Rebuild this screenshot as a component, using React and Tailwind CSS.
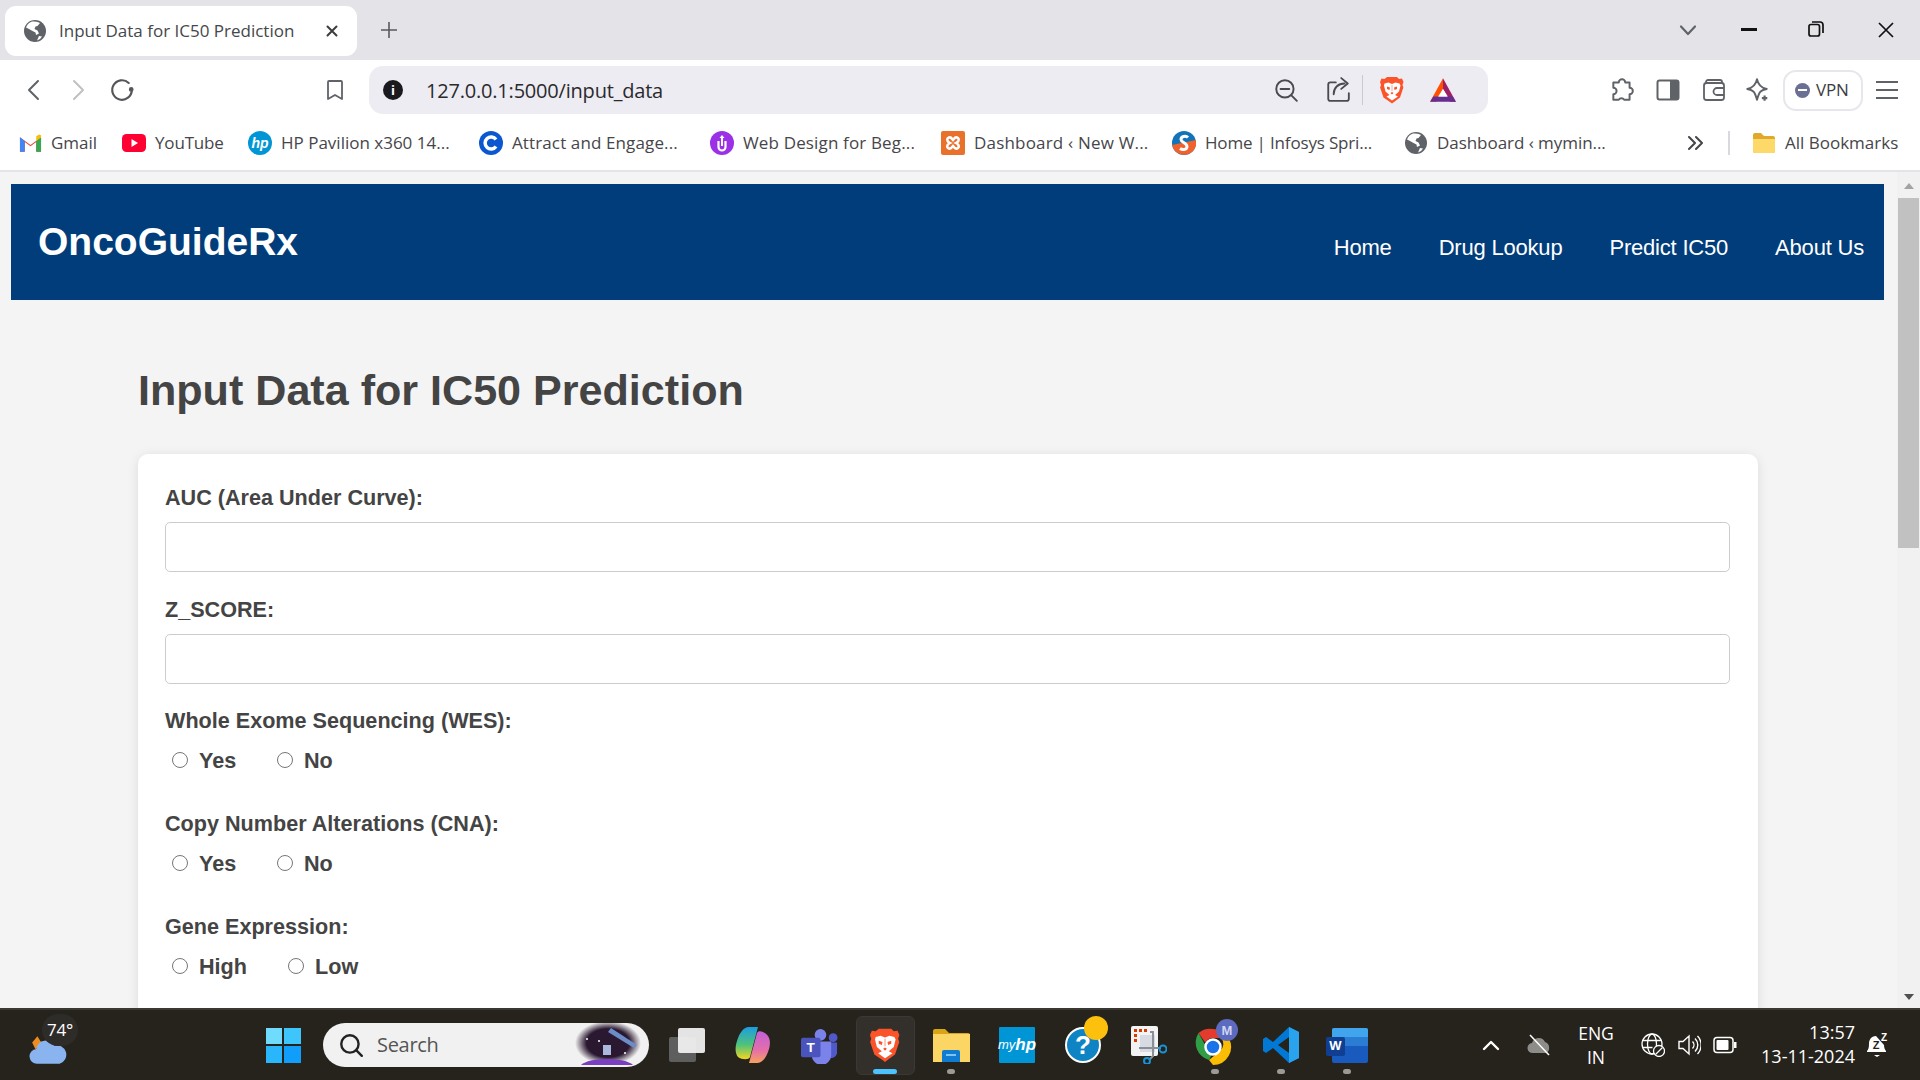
import React from "react";

const ui = "font-['Open_Sans','Noto_Sans',sans-serif]";

function Globe({ className }) {
  return (
    <svg viewBox="0 0 24 24" className={className}>
      <circle cx="12" cy="12" r="11" fill="#5f6368" />
      <path d="M9 2.500c3 0 6 0 8 1.500l-2.500 3-2 .5-1 2.500 3 1.500 1.500 3-3 1.500-.5-2.500-3-1.500-3.500-2L3 8.500c1-3 3-5 6-6z" fill="#fff" />
      <path d="M16 17l3 .5-2 2.500-3 1.500z" fill="#fff" />
    </svg>
  );
}

function Lion({ className }) {
  return (
    <svg viewBox="0 0 24 28" className={className}>
      <path d="M7 1h10l2 2 3-.5 1.500 3.500-1 3 .9 2.500-3.400 10L14 26l-2 1.500L10 26l-6.500-4.500L.1 11.500 1 9 0 6l1.500-3.500 3 .5z" fill="#fb542b" />
      <path d="M4.500 7.500l4-1 3.500 1.500 3.500-1.500 4 1 1 2-1.500 6-4 3.500 3 1.500L12 24.500 6.500 20.500l3-1.500-4-3.500-1.500-6z" fill="#fff" />
      <path d="M7 10.500l3 1-.5 2.500-2.500-1zM17 10.500l-3 1 .5 2.500 2.500-1zM10.500 17l1.500-1 1.500 1L12 18.500z" fill="#fb542b" />
      <path d="M11.500 9h1v6h-1z" fill="#fb542b" opacity=".5" />
    </svg>
  );
}

function Bat({ className }) {
  return (
    <svg viewBox="0 0 26 24" className={className}>
      <path d="M13 1L1 23h5.500L13 11z" fill="#ff5000" />
      <path d="M13 1l12 22h-5.500L13 11z" fill="#9e1f63" />
      <path d="M1 23h24l-3-5H4z" fill="#662d91" />
      <path d="M13 11l-4.500 7h9z" fill="#fff" />
    </svg>
  );
}

function Stroke({ className, children, w = 1.7, c = "#5f6368", vb = "0 0 24 24" }) {
  return (
    <svg viewBox={vb} className={className} fill="none" stroke={c} strokeWidth={w} strokeLinecap="round" strokeLinejoin="round">
      {children}
    </svg>
  );
}

function Bookmark({ text, icon, cls, track = "" }) {
  return (
    <div className={"flex items-center gap-[9px] shrink-0 " + cls}>
      {icon}
      <span className={"whitespace-nowrap text-[17px] leading-[24px] text-[#46464a] " + track}>{text}</span>
    </div>
  );
}

function Slot({ children, dot, active }) {
  return (
    <div className="relative w-[66px] h-full flex items-center justify-center shrink-0">
      {active && <div className="absolute left-[4px] top-[6px] w-[59px] h-[59px] rounded-[6px] bg-[#33302b] border border-[#3b3833]" />}
      <div className="relative flex items-center justify-center">{children}</div>
      {dot && <div className="absolute left-[29px] bottom-[6px] w-[8px] h-[5px] rounded-full bg-[#9b9a96]" />}
      {active && <div className="absolute left-[21px] bottom-[6px] w-[24px] h-[5px] rounded-full bg-[#4cc2ff]" />}
    </div>
  );
}

function Radio({ text, gap }) {
  return (
    <label className={"flex items-center " + gap}>
      <span className="w-[16px] h-[16px] rounded-full border border-[#767676] bg-white shrink-0 -mt-[2px]" />
      <span className="ml-[11px] text-[21.6px] leading-[24px] font-bold text-[#444]">{text}</span>
    </label>
  );
}

function Field({ label, cls }) {
  return (
    <div className={cls}>
      <div className="text-[21.6px] leading-[23px] font-bold text-[#444]">{label}</div>
      <input className="block mt-[13px] w-full h-[50px] border border-[#ccc] rounded-[5px] bg-white" />
    </div>
  );
}

function RadioGroup({ label, a, b, bGap, cls }) {
  return (
    <div className={cls}>
      <div className="text-[21.6px] leading-[23px] font-bold text-[#444]">{label}</div>
      <div className="flex mt-[17px] ml-[7px]">
        <Radio text={a} gap={bGap} />
        <Radio text={b} gap="" />
      </div>
    </div>
  );
}

export default function App() {
  return (
    <div className="w-[1920px] h-[1080px] flex flex-col overflow-hidden bg-[#f4f4f4]">
      {/* Tab strip */}
      <div className={"h-[60px] bg-[#e3e3e8] flex shrink-0 relative " + ui}>
        <div className="ml-[5px] mt-[6px] w-[352px] h-[50px] bg-white rounded-[11px] flex items-center pl-[18px] shrink-0">
          <Globe className="w-[24px] h-[24px] shrink-0" />
          <span className="ml-[12px] text-[17px] text-[#45474a] whitespace-nowrap">Input Data for IC50 Prediction</span>
          <svg viewBox="0 0 12 12" className="w-[12px] h-[12px] ml-auto mr-[19px]" stroke="#3c3c40" strokeWidth="2" strokeLinecap="round"><path d="M1.500 1.500l9 9M10.500 1.500l-9 9" /></svg>
        </div>
        <svg viewBox="0 0 16 16" className="w-[16px] h-[16px] ml-[24px] mt-[22px]" stroke="#5a5a5e" strokeWidth="1.600"><path d="M8 0v16M0 8h16" /></svg>
        <Stroke className="w-[18px] h-[18px] ml-[1282px] mt-[21px]" w={2.2} vb="0 0 18 18"><path d="M2 5.500l7 7.500 7-7.500" /></Stroke>
        <div className="w-[16px] h-[2.500px] bg-[#111] ml-[44px] mt-[28px]" />
        <svg viewBox="0 0 16 16" className="w-[16px] h-[16px] ml-[51px] mt-[21px]" fill="none" stroke="#111" strokeWidth="1.700"><rect x="1" y="3.500" width="10.500" height="11.500" rx="2" /><path d="M4 1h8a3 3 0 0 1 3 3v8" /></svg>
        <svg viewBox="0 0 16 16" className="w-[16px] h-[16px] ml-[54px] mt-[22px]" stroke="#111" strokeWidth="1.700"><path d="M1 1l14 14M15 1L1 15" /></svg>
      </div>
      {/* Toolbar */}
      <div className={"h-[60px] bg-white flex items-center shrink-0 " + ui}>
        <Stroke className="w-[24px] h-[24px] ml-[22px]" w={2}><path d="M16 3L7 12l9 9" /></Stroke>
        <Stroke className="w-[24px] h-[24px] ml-[20px]" w={2} c="#c0c0c4"><path d="M8 3l9 9-9 9" /></Stroke>
        <Stroke className="w-[26px] h-[26px] ml-[19px]" w={2} c="#55565a"><path d="M21 12a9 9 0 1 1-2.800-6.500" /><circle cx="20.500" cy="11.500" r="1.200" fill="#55565a" /></Stroke>
        <Stroke className="w-[24px] h-[24px] ml-[188px]" w={1.800}><path d="M6 3h12a1 1 0 0 1 1 1v17l-7-4-7 4V4a1 1 0 0 1 1-1z" /></Stroke>
        <div className="ml-[22px] w-[1119px] h-[48px] bg-[#edecf2] rounded-[14px] flex items-center relative shrink-0">
          <div className="ml-[14px] w-[20px] h-[20px] rounded-full bg-[#1a1a1e] flex items-center justify-center text-white text-[13px] font-bold leading-none">i</div>
          <span className="ml-[23px] mt-[1px] text-[20px] tracking-[-0.2px] text-[#2a2a2e] whitespace-nowrap">127.0.0.1:5000/input_data</span>
          <div className="ml-auto flex items-center">
            <Stroke className="w-[26px] h-[26px]" w={1.800} c="#4a4b50"><circle cx="11" cy="11" r="8" /><path d="M7 11h8M17 17l5 5" /></Stroke>
            <Stroke className="w-[26px] h-[26px] ml-[26px]" w={1.700} c="#4a4b50"><path d="M10 5H5a2 2 0 0 0-2 2v13a2 2 0 0 0 2 2h15a2 2 0 0 0 2-2v-5" /><path d="M8 16c0-6 4-10 10-10M15 1l6 5-6 5" /></Stroke>
            <div className="w-[1.500px] h-[30px] bg-[#c9c9cf] ml-[11px]" />
            <Lion className="w-[24px] h-[28px] ml-[17px]" />
            <Bat className="w-[28px] h-[26px] ml-[25px] mr-[31px]" />
          </div>
        </div>
        <svg viewBox="0 0 24 24" className="w-[26px] h-[26px] ml-[121px]" fill="none" stroke="#5f6368" strokeWidth="1.800" strokeLinejoin="round"><path d="M9 5a3 3 0 0 1 6 0h4v5a3 3 0 0 1 0 6v5h-5a3 3 0 0 0-5 0H4v-5a3 3 0 0 0 0-6V5z" /></svg>
        <svg viewBox="0 0 24 24" className="w-[24px] h-[24px] ml-[21px]"><rect x="1.500" y="2.500" width="21" height="19" rx="2" fill="none" stroke="#5f6368" strokeWidth="2" /><rect x="14" y="3" width="8" height="18" fill="#5f6368" /></svg>
        <svg viewBox="0 0 24 24" className="w-[24px] h-[24px] ml-[22px]" fill="none" stroke="#5f6368" strokeWidth="1.800"><rect x="2" y="5" width="20" height="17" rx="2.500" /><path d="M4 5V4a2 2 0 0 1 2-2h12a2 2 0 0 1 2 2v1M22 10h-7a3 3 0 0 0 0 7h7" /></svg>
        <svg viewBox="0 0 24 24" className="w-[26px] h-[26px] ml-[18px]" fill="none" stroke="#5f6368" strokeWidth="1.800" strokeLinejoin="round"><path d="M12 2c1 5 3 8 9 9-6 1-7 3-9 10-2-7-3-9-9-10 6-1 8-4 9-9z" /><path d="M19 17v5M16.500 19.500h5" strokeWidth="2" /></svg>
        <div className="ml-[13px] w-[80px] h-[41px] rounded-[13px] border-2 border-[#e6e6ec] flex items-center pl-[10px] shrink-0">
          <div className="w-[15px] h-[15px] rounded-full bg-[#6b6f93] flex items-center justify-center"><div className="w-[9px] h-[2px] bg-white" /></div>
          <span className="ml-[6px] text-[17px] tracking-[-0.2px] text-[#3c3c40]">VPN</span>
        </div>
        <div className="ml-[13px] w-[22px] flex flex-col gap-[6px] shrink-0">
          <div className="h-[2px] bg-[#5f6368]" /><div className="h-[2px] bg-[#5f6368]" /><div className="h-[2px] bg-[#5f6368]" />
        </div>
      </div>
      {/* Bookmarks */}
      <div className={"h-[52px] bg-white border-b-2 border-[#e3e3e8] flex items-center pl-[19px] pb-[4px] shrink-0 " + ui}>
        <Bookmark cls="w-[103px]" text="Gmail" icon={
          <svg viewBox="0 0 24 18" className="w-[23px] h-[18px]"><path d="M1 18V3l11 8 11-8v15h-5V8l-6 4.500L6 8v10z" fill="#ea4335" /><path d="M1 3v15h5V7z" fill="#4285f4" /><path d="M23 3v15h-5V7z" fill="#34a853" /><path d="M18 7l5-4V1l-2-1-3 2z" fill="#fbbc04" /></svg>
        } />
        <Bookmark cls="w-[126px]" track="tracking-[-0.17px]" text="YouTube" icon={
          <svg viewBox="0 0 24 18" className="w-[24px] h-[18px]"><rect width="24" height="18" rx="4.500" fill="#ff0033" /><path d="M9.500 5l6.500 4-6.500 4z" fill="#fff" /></svg>
        } />
        <Bookmark cls="w-[231px]" text="HP Pavilion x360 14..." icon={
          <svg viewBox="0 0 24 24" className="w-[24px] h-[24px]"><circle cx="12" cy="12" r="12" fill="#0096d6" /><text x="12" y="17" textAnchor="middle" fontSize="14" fontStyle="italic" fontWeight="700" fill="#fff" fontFamily="Liberation Sans">hp</text></svg>
        } />
        <Bookmark cls="w-[231px]" track="tracking-[0.12px]" text="Attract and Engage..." icon={
          <svg viewBox="0 0 24 24" className="w-[24px] h-[24px]"><circle cx="12" cy="12" r="12" fill="#0b57d0" /><path d="M17 8.500a6 6 0 1 0 0 7" fill="none" stroke="#fff" strokeWidth="3.500" /></svg>
        } />
        <Bookmark cls="w-[231px]" track="tracking-[0.15px]" text="Web Design for Beg..." icon={
          <svg viewBox="0 0 24 24" className="w-[24px] h-[24px]"><circle cx="12" cy="12" r="12" fill="#9b30e6" /><path d="M8.500 10v6a3.500 3.500 0 0 0 7 0v-6" fill="none" stroke="#fff" strokeWidth="2.200" /><path d="M12 4l2.500 3h-5zM11 7h2v8h-2z" fill="#fff" /></svg>
        } />
        <Bookmark cls="w-[231px]" track="tracking-[0.19px]" text="Dashboard ‹ New W..." icon={
          <svg viewBox="0 0 24 24" className="w-[24px] h-[24px]"><rect width="24" height="24" rx="2" fill="#e8722c" /><path d="M7 7c3-2 4 1 5 2 1-1 2-4 5-2 2 2 0 4-2 5 2 1 4 3 2 5-3 2-4-1-5-2-1 1-2 4-5 2-2-2 0-4 2-5-2-1-4-3-2-5z" fill="none" stroke="#fff" strokeWidth="2.500" /></svg>
        } />
        <Bookmark cls="w-[232px]" track="tracking-[-0.17px]" text="Home | Infosys Spri..." icon={
          <svg viewBox="0 0 24 24" className="w-[24px] h-[24px]"><circle cx="12" cy="12" r="12" fill="#1173b8" /><path d="M0 14L24 9a12 12 0 0 1-24 5z" fill="#f0622c" /><path d="M16 6.500c-2-2-7-1.500-7 2 0 3 6 3 6 7 0 3-4 4-7 2" fill="none" stroke="#fff" strokeWidth="3" /></svg>
        } />
        <Bookmark cls="w-[284px]" track="tracking-[-0.05px]" text="Dashboard ‹ mymin..." icon={<Globe className="w-[24px] h-[24px]" />} />
        <Stroke className="w-[16px] h-[16px] shrink-0 -ml-[1px]" w={2} c="#46464a" vb="0 0 16 16"><path d="M2 2l6 6-6 6M9 2l6 6-6 6" /></Stroke>
        <div className="w-[2px] h-[24px] bg-[#d8d8dd] ml-[25px] shrink-0" />
        <Bookmark cls="ml-[22px]" text="All Bookmarks" icon={
          <svg viewBox="0 0 24 22" className="w-[24px] h-[22px]"><path d="M1 3a2 2 0 0 1 2-2h6l3 3h9a2 2 0 0 1 2 2v13a2 2 0 0 1-2 2H3a2 2 0 0 1-2-2z" fill="#e0a92c" /><path d="M1 7h22v12a2 2 0 0 1-2 2H3a2 2 0 0 1-2-2z" fill="#fcd968" /></svg>
        } />
      </div>
      {/* Page */}
      <div className="flex-1 min-h-0 flex overflow-hidden font-['Liberation_Sans',Arial,sans-serif]">
        <div className="w-[1897px] shrink-0 pl-[11px] pr-[13px] pt-[12px]">
          <nav className="h-[116px] bg-[#003d7a] flex text-white">
            <div className="ml-[27px] mt-[35px] text-[39px] leading-[46px] font-bold">OncoGuideRx</div>
            <div className="ml-auto mr-[20px] mt-[51px] flex gap-[47px] text-[22px] leading-[26px] tracking-[-0.2px]">
              <span>Home</span><span>Drug Lookup</span><span>Predict IC50</span><span>About Us</span>
            </div>
          </nav>
          <main className="ml-[127px] mr-[126px]">
            <h1 className="mt-[65px] text-[43.1px] leading-[50px] font-bold text-[#444]">Input Data for IC50 Prediction</h1>
            <div className="mt-[39px] bg-white rounded-[10px] shadow-[0_2px_12px_rgba(0,0,0,0.1)] pl-[27px] pr-[28px] pt-[32px] h-[700px]">
              <Field label="AUC (Area Under Curve):" />
              <Field label="Z_SCORE:" cls="mt-[26px]" />
              <RadioGroup label="Whole Exome Sequencing (WES):" a="Yes" b="No" bGap="w-[105px]" cls="mt-[25px]" />
              <RadioGroup label="Copy Number Alterations (CNA):" a="Yes" b="No" bGap="w-[105px]" cls="mt-[39px]" />
              <RadioGroup label="Gene Expression:" a="High" b="Low" bGap="w-[116px]" cls="mt-[39px]" />
            </div>
          </main>
        </div>
        <div className="flex-1 bg-[#f1f1f1] flex flex-col items-center">
          <div className="mt-[11px] w-0 h-0 border-x-[5px] border-x-transparent border-b-[6px] border-b-[#a3a3a3]" />
          <div className="mt-[9px] w-[21px] h-[350px] bg-[#c1c1c1]" />
          <div className="mt-auto mb-[8px] w-0 h-0 border-x-[5px] border-x-transparent border-t-[6px] border-t-[#505050]" />
        </div>
      </div>
      {/* Taskbar */}
      <div className={"h-[72px] bg-[#26231d] border-t-[2px] border-[#3a3833] flex items-center shrink-0 relative " + ui}>
        <div className="w-[251px] h-full relative shrink-0">
          <svg viewBox="0 0 36 30" className="absolute left-[29px] top-[24px] w-[38px] h-[32px]">
            <path d="M8 2l3 5 6 1-3 4-8 2-3-6z" fill="#f08c1e" />
            <path d="M8 28a7 7 0 0 1-1-14 9 9 0 0 1 17-3 7 7 0 0 1 5 17z" fill="#8ab4f0" />
          </svg>
          <div className="absolute left-[42px] top-[4px] w-[36px] h-[32px] rounded-full bg-[#2e2c28] flex items-center justify-center text-[17px] tracking-[-0.3px] text-white">74°</div>
        </div>
        <Slot>
          <div className="grid grid-cols-2 gap-[2px] w-[35px] h-[35px] -ml-[2px]">
            <div className="bg-[#6fdcfd]" /><div className="bg-[#3ec5fc]" /><div className="bg-[#29b6fb]" /><div className="bg-[#119dfa]" />
          </div>
        </Slot>
        <div className="ml-[6px] w-[326px] h-[44px] rounded-full bg-[#f1f1f1] flex items-center pl-[15px] relative shrink-0">
          <Stroke className="w-[26px] h-[26px]" w={2.200} c="#222"><circle cx="11" cy="11" r="8" /><path d="M17 17l5 5" /></Stroke>
          <span className="ml-[13px] text-[20px] tracking-[-0.3px] text-[#555]">Search</span>
          <svg viewBox="0 0 66 44" className="absolute right-[8px] top-0 w-[66px] h-[44px]">
            <defs><radialGradient id="sp"><stop offset="0.65" stopColor="#2a1830" /><stop offset="1" stopColor="#2a1830" stopOpacity="0" /></radialGradient></defs>
            <ellipse cx="33" cy="20" rx="33" ry="22" fill="url(#sp)" />
            <path d="M36 5l26 17-3 3L33 9z" fill="#6c8cc8" />
            <rect x="28" y="22" width="8" height="10" fill="#aab8dc" />
            <path d="M6 42c8-8 44-8 52 0z" fill="#7a3fc0" />
            <circle cx="12" cy="16" r="1" fill="#fff" /><circle cx="24" cy="18" r="1" fill="#fff" /><circle cx="50" cy="30" r="1" fill="#fff" />
          </svg>
        </div>
        <div className="ml-[5px] flex h-full shrink-0">
          <Slot>
            <div className="relative w-[36px] h-[34px]">
              <div className="absolute left-0 bottom-0 w-[27px] h-[25px] bg-[#5e5e5e] rounded-[2px]" />
              <div className="absolute right-0 top-0 w-[27px] h-[25px] bg-[#efefef] rounded-[2px] opacity-95" />
            </div>
          </Slot>
          <Slot>
            <svg viewBox="0 0 36 40" className="w-[36px] h-[40px]">
              <defs>
                <linearGradient id="cp1" x1="0" y1="0" x2="0" y2="1"><stop offset="0" stopColor="#1b9de2" /><stop offset="0.55" stopColor="#4fc27a" /><stop offset="1" stopColor="#f5d520" /></linearGradient>
                <linearGradient id="cp2" x1="0" y1="0" x2="0" y2="1"><stop offset="0" stopColor="#c35fd8" /><stop offset="0.6" stopColor="#e56fa8" /><stop offset="1" stopColor="#f7a35c" /></linearGradient>
              </defs>
              <path d="M14 2h9l-8 30c-1 3-8 3-12 0C0 28 0 22 2 16c2-7 6-14 12-14z" fill="url(#cp1)" />
              <path d="M22 38h-8l8-30c1-2 3-2 6-1 7 3 8 10 6 17-2 7-6 14-12 14z" fill="url(#cp2)" />
            </svg>
          </Slot>
          <Slot>
            <svg viewBox="0 0 38 38" className="w-[37px] h-[37px]">
              <circle cx="20" cy="8" r="6" fill="#7b83eb" /><circle cx="33" cy="11" r="4.500" fill="#5059c9" />
              <path d="M28 16h9v11a6 6 0 0 1-9 4z" fill="#5059c9" />
              <path d="M11 15h20v14a10 10 0 0 1-20 0z" fill="#7b83eb" />
              <rect x="0" y="11" width="20" height="20" rx="2" fill="#4b53bc" />
              <text x="10" y="26" textAnchor="middle" fontSize="14" fontWeight="700" fill="#fff" fontFamily="Liberation Sans">T</text>
            </svg>
          </Slot>
          <Slot active dot={false}><Lion className="w-[30px] h-[36px]" /></Slot>
          <Slot dot>
            <svg viewBox="0 0 37 34" className="w-[37px] h-[34px]">
              <path d="M0 3a2 2 0 0 1 2-2h10l4 4h19a2 2 0 0 1 2 2v24H0z" fill="#d9a514" />
              <path d="M0 6h37v28H0z" fill="#fbd664" />
              <path d="M9 24a2 2 0 0 1 2-2h14a2 2 0 0 1 2 2v10H9z" fill="#0f7bd1" />
              <path d="M13 26h10v2H13z" fill="#7cc4f2" />
            </svg>
          </Slot>
          <Slot>
            <div className="w-[36px] h-[36px] bg-[#0096d6] flex items-center justify-center text-white text-[13px] italic rounded-[1px] font-['Liberation_Sans',sans-serif]">my<b className="text-[17px]">hp</b></div>
          </Slot>
          <Slot>
            <div className="relative w-[36px] h-[36px] rounded-full bg-[#0f84c4] border-2 border-white flex items-center justify-center text-white text-[26px] font-bold font-['Liberation_Sans',sans-serif]">
              ?
              <div className="absolute -right-[9px] -top-[13px] w-[24px] h-[24px] rounded-full bg-[#fdc10d]" />
            </div>
          </Slot>
          <Slot>
            <svg viewBox="0 0 36 38" className="w-[36px] h-[38px]">
              <rect x="0" y="0" width="27" height="30" rx="2" fill="#f3f3f3" />
              <path d="M3 3h3v3H3zM8 3h3v3H8zM13 3h3v3h-3zM3 8h3v3H3zM3 13h3v3H3z" fill="#d83b01" />
              <rect x="9" y="9" width="15" height="17" fill="#d8dce2" />
              <path d="M19 6l3 0 0 24-4 4M8 22l22 0" stroke="#8a8f98" strokeWidth="2" fill="none" />
              <circle cx="32" cy="23" r="3.500" fill="none" stroke="#1794d8" strokeWidth="2" />
              <circle cx="16" cy="35" r="3" fill="none" stroke="#1794d8" strokeWidth="2" />
            </svg>
          </Slot>
          <Slot dot>
            <svg viewBox="0 0 46 46" className="w-[46px] h-[46px] ml-[6px] -mt-[6px]">
              <path d="M18 10a18 18 0 0 1 15.600 9H18a9 9 0 0 0-7.800 4.500L3.500 14A18 18 0 0 1 18 10z" fill="#e33b2e" />
              <path d="M3.500 14l7.500 13.500a9 9 0 0 0 8 4.500l-5 9A18 18 0 0 1 3.500 14z" fill="#2f9e44" />
              <path d="M33.600 19A18 18 0 0 1 18 46l-4-5 11-9a9 9 0 0 0 1-13z" fill="#fbbc04" />
              <circle cx="18" cy="28" r="7.500" fill="#1a73e8" stroke="#fff" strokeWidth="2.500" />
              <circle cx="32" cy="11" r="11" fill="#5c6bc0" />
              <text x="32" y="16" textAnchor="middle" fontSize="13" fontWeight="700" fill="#d0d4f0" fontFamily="Liberation Sans">M</text>
            </svg>
          </Slot>
          <Slot dot>
            <svg viewBox="0 0 36 38" className="w-[36px] h-[38px]">
              <path d="M26 1l10 5v26l-10 5-16-15-7 5-3-2v-12l3-2 7 5z" fill="#0078d4" />
              <path d="M26 1l10 5v26l-10 5z" fill="#2aa3ee" />
              <path d="M26 11L15 19l11 8z" fill="#26231d" />
            </svg>
          </Slot>
          <Slot dot>
            <div className="relative w-[36px] h-[35px] ml-[6px]">
              <div className="absolute inset-0 rounded-[2px] bg-[#185abd]" />
              <div className="absolute left-0 right-0 top-0 h-[9px] bg-[#41a5ee] rounded-t-[2px]" />
              <div className="absolute left-0 right-0 top-[9px] h-[9px] bg-[#2b7cd3]" />
              <div className="absolute -left-[6px] top-[9px] w-[19px] h-[19px] bg-[#103f91] rounded-[2px] flex items-center justify-center text-white text-[13px] font-bold font-['Liberation_Sans',sans-serif]">W</div>
            </div>
          </Slot>
        </div>
        <Stroke className="w-[28px] h-[18px] ml-[97px] shrink-0" w={2.400} c="#fff" vb="0 0 28 18"><path d="M7 13l7-7 7 7" /></Stroke>
        <svg viewBox="0 0 24 22" className="w-[24px] h-[22px] ml-[22px] shrink-0"><path d="M6 19a5 5 0 0 1-1-10 7 7 0 0 1 13-1 6 6 0 0 1 1 11z" fill="#8d8c88" /><path d="M3 1l19 20" stroke="#fff" strokeWidth="1.500" /></svg>
        <div className="ml-[20px] w-[50px] text-center text-[17.500px] leading-[24px] text-white shrink-0">ENG<br />IN</div>
        <svg viewBox="0 0 24 24" className="w-[24px] h-[24px] ml-[20px] shrink-0" fill="none" stroke="#fff" strokeWidth="1.300"><circle cx="11" cy="11" r="10" /><ellipse cx="11" cy="11" rx="4.500" ry="10" /><path d="M1.500 7.500h19M1.500 14.500h10" /><circle cx="18" cy="18" r="5.500" fill="#26231d" /><path d="M14.500 21.500l7-7" /></svg>
        <svg viewBox="0 0 24 24" className="w-[24px] h-[24px] ml-[12px] shrink-0" fill="none" stroke="#fff" strokeWidth="1.400"><path d="M2 8.500h4l6-5.500v18l-6-5.500H2z" /><path d="M15.500 8.500a5 5 0 0 1 0 7M18 5.500a9 9 0 0 1 0 13M20.500 3a13 13 0 0 1 0 18" /></svg>
        <svg viewBox="0 0 24 18" className="w-[24px] h-[18px] ml-[12px] shrink-0"><rect x="1" y="1.500" width="19" height="15" rx="3" fill="none" stroke="#fff" strokeWidth="1.500" /><rect x="3.500" y="4" width="12" height="10" rx="1" fill="#fff" /><rect x="21" y="6" width="2.500" height="6" fill="#fff" /></svg>
        <div className="w-[118px] text-right text-[18px] leading-[24px] text-white shrink-0 -mt-[2px]">13:57<br />13-11-2024</div>
        <svg viewBox="0 0 22 26" className="w-[22px] h-[26px] ml-[12px] shrink-0"><path d="M9 4c-5 0-7 4-7 8 0 4-1 6-2 7v1h19v-1c-1-1-2-3-2-6" fill="#fff" /><path d="M7 23h6l-3 2z" fill="#fff" /><text x="9" y="17" textAnchor="middle" fontSize="11" fontWeight="700" fill="#26231d" fontFamily="Liberation Sans">Z</text><text x="17" y="9" textAnchor="middle" fontSize="10" fontWeight="700" fill="#fff" fontFamily="Liberation Sans">Z</text></svg>
      </div>
    </div>
  );
}
